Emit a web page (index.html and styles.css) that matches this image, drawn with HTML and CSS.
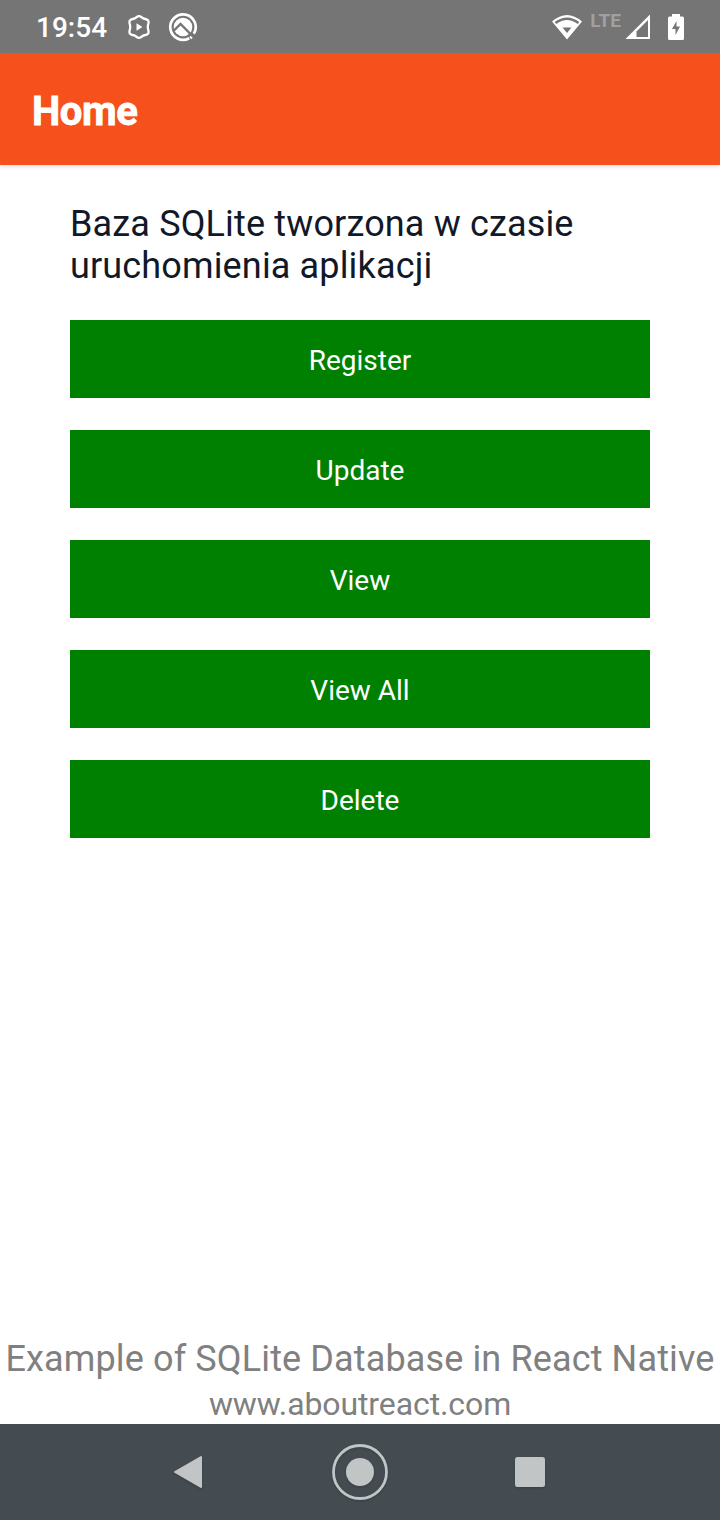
FILE: index.html
```html
<!DOCTYPE html>
<html lang="pl">
<head>
<meta charset="utf-8">
<title>Home</title>
<link rel="stylesheet" href="styles.css">
</head>
<body>
<div class="status">
  <span class="clock">19:54</span>
  <svg class="hex" width="24" height="26" viewBox="0 0 24 26"><path d="M9.600 3.200Q12 1 14.400 3.200Q16 4.700 18.300 5Q22.300 5.700 21.400 9.300Q20.200 13 21.400 16.700Q22.300 20.300 18.300 21Q16 21.300 14.400 22.800Q12 25 9.600 22.800Q8 21.300 5.700 21Q1.700 20.300 2.600 16.700Q3.800 13 2.600 9.300Q1.700 5.700 5.700 5Q8 4.700 9.600 3.200Z" fill="none" stroke="#fff" stroke-width="2.300" stroke-linejoin="round"/><path d="M9.500 9.300v7.400l6-3.700z" fill="#fff"/></svg>
  <svg class="disc" width="30" height="30" viewBox="0 0 30 30"><path d="M21.200 26.200A12.700 12.700 0 1 1 25.800 21.800" fill="none" stroke="#fff" stroke-width="2.700"/><circle cx="15" cy="15" r="9.300" fill="#fff"/><path d="M5 19.500L12.500 12L24.500 24" fill="none" stroke="#757575" stroke-width="2.400"/><path d="M22 24.500L24 26.500" stroke="#fff" stroke-width="2"/></svg>
  <span class="spacer"></span>
  <svg class="wifi" width="32" height="28" viewBox="0 0 32 28"><path d="M1 8.500Q16-4.500 31 8.500L16 26.500Z" fill="#fff"/><path d="M4.500 10Q16 1.500 27.500 10" fill="none" stroke="#757575" stroke-width="2.600"/><path d="M11.500 14.500H20.500L16 20Z" fill="#757575"/></svg>
  <span class="lte">LTE</span>
  <svg class="signal" width="26" height="26" viewBox="0 0 26 26"><path d="M25 .500V25H.500Z" fill="#fff"/><path d="M23 6V23H11.500V17.500Z" fill="#757575"/></svg>
  <svg class="battery" width="18" height="28" viewBox="0 0 18 28"><path d="M5 1h8v2.500h2.500Q17 3.500 17 5v20.500Q17 27 15.500 27h-13Q1 27 1 25.500V5Q1 3.500 2.500 3.500H5z" fill="#fff"/><path d="M9.500 8 5 16h3.500v6L13 13.500H9.500z" fill="#757575"/></svg>
</div>
<header class="appbar"><h1 class="title">Home</h1></header>
<main class="content">
  <p class="intro">Baza SQLite tworzona w czasie<br>uruchomienia aplikacji</p>
  <div class="buttons">
    <button class="btn">Register</button>
    <button class="btn">Update</button>
    <button class="btn">View</button>
    <button class="btn">View All</button>
    <button class="btn">Delete</button>
  </div>
</main>
<footer class="footer">
  <div class="caption">Example of SQLite Database in React Native</div>
  <div class="site">www.aboutreact.com</div>
</footer>
<nav class="nav">
  <svg class="navicons" width="720" height="96" viewBox="0 0 720 96"><path d="M175 48 201 33V63Z" fill="#c1c5c6" stroke="#c1c5c6" stroke-width="2" stroke-linejoin="round"/><circle cx="360" cy="48" r="26.500" fill="none" stroke="#c1c5c6" stroke-width="2.800"/><circle cx="360" cy="48" r="14" fill="#c1c5c6"/><rect x="515" y="33" width="30" height="30" rx="2.500" fill="#c1c5c6"/></svg>
</nav>
</body>
</html>
```
FILE: styles.css
```css
body{margin:0;width:720px;height:1520px;display:flex;flex-direction:column;background:#fff;font-family:Roboto,sans-serif;overflow:hidden}
svg{display:block;flex:none}
.status{height:53px;flex:none;background:#757575;display:flex;align-items:center;color:#fff;box-sizing:border-box;padding:0 35px 0 36px;position:relative;z-index:1}
.clock{font-size:28px;font-weight:500;width:91px;padding-top:2px}
.hex{margin-right:17px}
.spacer{flex:1}
.wifi{margin-right:-1px}
.lte{font-size:19px;font-weight:700;color:#a0a0a0;margin:-13px 4px 0 8px}
.signal{margin-right:16px}
.appbar{height:112px;flex:none;background:#f6511d;display:flex;align-items:center;padding-left:32px;box-shadow:0 1px 5px rgba(0,0,0,.16)}
.title{margin:5px 0 0;font-size:40px;font-weight:700;color:#fff;letter-spacing:-.4px;-webkit-text-stroke:.8px #fff}
.content{padding:38px 70px 0;flex:1}
.intro{margin:0;font-size:36px;line-height:42px;letter-spacing:.15px;color:#111827}
.buttons{display:flex;flex-direction:column;gap:32px;margin-top:33px}
.btn{height:78px;border:0;padding:3px 0 0;background:#008000;color:#fff;font:400 28px Roboto,sans-serif}
.footer{text-align:center;color:#808080;height:86px;flex:none;white-space:nowrap}
.caption{font-size:36px;line-height:42px;letter-spacing:.13px}
.site{font-size:32px;line-height:38px;margin-top:5px;letter-spacing:-.1px}
.nav{height:96px;flex:none;background:#444c52}
.navicons{filter:drop-shadow(0 1px 1px rgba(0,0,0,.2))}
```
